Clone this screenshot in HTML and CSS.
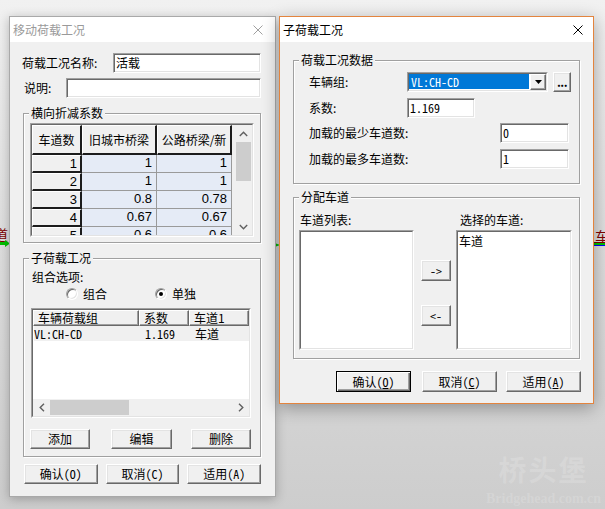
FILE: index.html
```html
<!DOCTYPE html>
<html lang="zh-CN">
<head>
<meta charset="utf-8">
<title>移动荷载工况</title>
<link rel="stylesheet" href="styles.css">
</head>
<body>
<main class="desktop">
  <span class="cad-text cad-text-left">道</span>
  <svg class="cad-arrow" width="10" height="7" viewBox="0 0 10 7"><path d="M0 2H5V0L10 3.5L5 7V5H0Z" fill="#00c000"/></svg>
  <svg class="cad-flag" width="6" height="6" viewBox="0 0 6 6"><path d="M0 0H2V1.5L6 3L2 4.5V6H0Z" fill="#00c000"/></svg>
  <span class="cad-text cad-text-right">车</span>
  <span class="cad-line cad-line-red"></span>
  <span class="cad-line cad-line-green"></span>
  <span class="cad-line cad-line-blue"></span>
  <div class="watermark"><span class="wm-cn">桥头堡</span><span class="wm-en">Bridgehead.com.cn</span></div>

  <section class="window win-left">
    <header class="titlebar inactive">
      <span class="title">移动荷载工况</span>
      <svg class="close" viewBox="0 0 10 10"><path d="M0.5 0.5L9.5 9.5M9.5 0.5L0.5 9.5"/></svg>
    </header>
    <div class="body body-left">
      <div class="row"><span class="lbl lbl-name">荷载工况名称:</span><div class="edit">活载</div></div>
      <div class="row row-desc"><span class="lbl lbl-desc">说明:</span><div class="edit"></div></div>

      <div class="group group-factor">
        <span class="legend">横向折减系数</span>
        <div class="sunken grid-frame"><div class="sunken-in grid-in">
          <div class="grid">
            <div class="gh">车道数</div><div class="gh">旧城市桥梁</div><div class="gh">公路桥梁/新</div>
            <div class="gr">1</div><div class="gd">1</div><div class="gd">1</div>
            <div class="gr">2</div><div class="gd">1</div><div class="gd">1</div>
            <div class="gr">3</div><div class="gd">0.8</div><div class="gd">0.78</div>
            <div class="gr">4</div><div class="gd">0.67</div><div class="gd">0.67</div>
            <div class="gr">5</div><div class="gd">0.6</div><div class="gd">0.6</div>
          </div>
          <div class="vscroll">
            <span class="sb-btn"><svg width="9" height="6" viewBox="0 0 9 6"><polyline points="0.8,5 4.5,1.2 8.2,5" class="chev"/></svg></span>
            <span class="sb-track"><span class="sb-thumb"></span></span>
            <span class="sb-btn"><svg width="9" height="6" viewBox="0 0 9 6"><polyline points="0.8,1 4.5,4.8 8.2,1" class="chev"/></svg></span>
          </div>
        </div></div>
      </div>

      <div class="group group-sub">
        <span class="legend">子荷载工况</span>
        <div class="opt-label">组合选项:</div>
        <div class="radios">
          <span class="radio r-first"><span class="rb"></span>组合</span>
          <span class="radio"><span class="rb checked"></span>单独</span>
        </div>
        <div class="sunken lv-frame"><div class="sunken-in lv-in">
          <div class="lv-head"><span class="lh c-a">车辆荷载组</span><span class="lh c-b">系数</span><span class="lh c-c">车道1</span></div>
          <div class="lv-row"><span class="c-a mono">VL:CH-CD</span><span class="c-b mono">1.169</span><span class="c-c">车道</span></div>
          <div class="lv-fill"></div>
          <div class="hscroll">
            <span class="sb-btn"><svg width="6" height="9" viewBox="0 0 6 9"><polyline points="5,0.8 1.2,4.5 5,8.2" class="chev"/></svg></span>
            <span class="sb-track h"><span class="sb-thumb h"></span></span>
            <span class="sb-btn"><svg width="6" height="9" viewBox="0 0 6 9"><polyline points="1,0.8 4.8,4.5 1,8.2" class="chev"/></svg></span>
          </div>
        </div></div>
        <div class="sub-btns">
          <button class="btn b-add">添加</button>
          <button class="btn b-edit">编辑</button>
          <button class="btn b-del">删除</button>
        </div>
      </div>

      <div class="btnbar btnbar-left">
        <button class="btn b74 mono">确认(O)</button>
        <button class="btn b74 mono">取消(C)</button>
        <button class="btn b74 mono">适用(A)</button>
      </div>
    </div>
  </section>

  <section class="window win-right">
    <header class="titlebar">
      <span class="title">子荷载工况</span>
      <svg class="close" viewBox="0 0 10 10"><path d="M0.5 0.5L9.5 9.5M9.5 0.5L0.5 9.5"/></svg>
    </header>
    <div class="body body-right">
      <div class="group group-data">
        <span class="legend">荷载工况数据</span>
        <div class="frow">
          <span class="flbl w98">车辆组:</span>
          <div class="sunken combo"><div class="sunken-in combo-in">
            <span class="combo-sel mono">VL:CH-CD</span>
            <span class="combo-btn"><svg width="7" height="4" viewBox="0 0 7 4"><path d="M0 0H7L3.5 4Z" fill="#000"/></svg></span>
          </div></div>
          <button class="btn btn-dots">...</button>
        </div>
        <div class="frow mt6"><span class="flbl w98">系数:</span><div class="edit mono e68">1.169</div></div>
        <div class="frow mt5"><span class="flbl w191">加载的最少车道数:</span><div class="edit mono e69">0</div></div>
        <div class="frow mt6"><span class="flbl w191">加载的最多车道数:</span><div class="edit mono e69">1</div></div>
      </div>

      <div class="group group-lane">
        <span class="legend">分配车道</span>
        <div class="lane-col col-l">
          <span class="collbl">车道列表:</span>
          <div class="sunken listbox"><div class="sunken-in lb-in"></div></div>
        </div>
        <div class="lane-mid">
          <button class="btn arrow-btn mono">-&gt;</button>
          <button class="btn arrow-btn mono second">&lt;-</button>
        </div>
        <div class="lane-col col-r">
          <span class="collbl">选择的车道:</span>
          <div class="sunken listbox"><div class="sunken-in lb-in"><span class="lb-item">车道</span></div></div>
        </div>
      </div>

      <div class="btnbar btnbar-right">
        <button class="btn btn-default b75 mono">确认(<u>O</u>)</button>
        <button class="btn b75 mono gap11">取消(<u>C</u>)</button>
        <button class="btn b75 mono gap9">适用(<u>A</u>)</button>
      </div>
    </div>
  </section>
</main>
</body>
</html>
```

FILE: styles.css
```css
* { box-sizing: border-box; }
html, body { margin: 0; padding: 0; }
body {
  width: 605px; height: 509px; overflow: hidden;
  font-family: "Noto Sans CJK SC", "Microsoft YaHei", sans-serif;
  font-size: 12px; line-height: 16px; color: #000;
}
.mono { font-family: "Noto Sans Mono CJK SC", "Noto Sans CJK SC", "DejaVu Sans Mono", monospace; }

.desktop {
  position: relative; width: 605px; height: 509px; overflow: hidden;
  background: linear-gradient(180deg, #f1f1f1 0%, #dedede 45%, #cdcdcd 100%);
}

/* CAD canvas decorations */
.cad-text { position: absolute; color: #800000; font-size: 14px; line-height: 14px; }
.cad-text-left { left: -6px; top: 227px; }
.cad-text-right { left: 595px; top: 229px; }
.cad-arrow { position: absolute; left: 0; top: 240px; }
.cad-flag { position: absolute; left: 274px; top: 242px; }
.cad-line { position: absolute; left: 594px; width: 12px; }
.cad-line-red { top: 242px; height: 1px; background: #800000; }
.cad-line-green { top: 243px; height: 2px; background: #00c000; }
.cad-line-blue { top: 245px; height: 1px; background: #0000ff; }

.watermark {
  position: absolute; left: 486px; top: 448px;
  display: flex; flex-direction: column; align-items: center;
  color: rgba(255, 255, 255, 0.16);
}
.wm-cn { font-family: "Noto Sans CJK SC", serif; font-size: 28px; line-height: 42px; font-weight: 700; letter-spacing: 2px; }
.wm-en { font-family: "Liberation Serif", serif; font-size: 14px; line-height: 17px; font-weight: 700; }

/* windows */
.window { position: absolute; background: #f0f0f0; display: flex; flex-direction: column; }
.win-left { left: 9px; top: 16px; width: 267px; height: 481px; border: 1px solid #a9a9a9; box-shadow: 0 2px 10px rgba(0,0,0,0.25); }
.win-right { left: 279px; top: 16px; width: 315px; height: 388px; border: 1px solid #e3843e; box-shadow: 0 4px 16px rgba(0,0,0,0.32); }

.titlebar {
  flex: none; height: 25px; background: #fff;
  display: flex; align-items: center; justify-content: space-between;
  padding-left: 3px;
}
.title { font-size: 12px; }
.titlebar.inactive .title { color: #9a9a9a; }
.close { width: 10px; height: 10px; fill: none; stroke: #000; stroke-width: 1; }
.titlebar.inactive .close { stroke: #a0a0a0; }
.win-left .close { margin-right: 12px; }
.win-right .close { margin-right: 10px; }

.body { flex: 1; display: flex; flex-direction: column; }
.body-left { padding: 11px 14px 0 12px; }
.body-right { padding: 18px 13px 0 12px; }

/* 3D borders */
.sunken { border: 1px solid; border-color: #a0a0a0 #fff #fff #a0a0a0; background: #fff; }
.sunken-in { height: 100%; border: 1px solid; border-color: #696969 #e3e3e3 #e3e3e3 #696969; }

.edit {
  height: 20px; background: #fff; flex: 1;
  border: 1px solid; border-color: #a0a0a0 #fff #fff #a0a0a0;
  box-shadow: inset 1px 1px 0 #696969, inset -1px -1px 0 #e3e3e3;
  padding: 1px 2px 0 2px; line-height: 16px; white-space: nowrap;
}

.btn {
  appearance: none; margin: 0; padding: 0;
  font-size: 12px; line-height: 16px; color: #000;
  background: #f0f0f0;
  border: 1px solid; border-color: #fff #696969 #696969 #fff;
  box-shadow: inset -1px -1px 0 #a0a0a0, inset 1px 1px 0 #e3e3e3;
  display: flex; align-items: center; justify-content: center;
  height: 20px;
}
.btn:not(.mono) { font-family: "Noto Sans CJK SC", sans-serif; }
.btn u { text-underline-offset: 1px; }
.btn-default {
  border-color: #000;
  box-shadow: inset 1px 1px 0 #fff, inset -1px -1px 0 #696969, inset -2px -2px 0 #a0a0a0;
}

/* left dialog */
.row { display: flex; align-items: center; height: 20px; }
.row-desc { margin-top: 5px; }
.lbl { flex: none; white-space: nowrap; }
.lbl-name { width: 91px; }
.lbl-desc { width: 44px; padding-left: 2px; }

.group {
  position: relative; margin-left: 1px;
  border: 1px solid #a0a0a0;
  box-shadow: inset 1px 1px 0 #fff, 1px 1px 0 #fff;
}
.legend {
  position: absolute; top: -9px; left: 5px;
  padding: 0 2px; background: #f0f0f0; line-height: 16px; white-space: nowrap;
}
.group-factor { margin-top: 15px; height: 130px; padding: 9px 0 0 6px; }
.grid-frame { width: 224px; height: 114px; }
.grid-in { display: flex; justify-content: space-between; background: #f0f0f0; overflow: hidden; }
.grid {
  display: grid; width: 200px; align-self: flex-start;
  grid-template-columns: 50px 75px 75px;
  grid-template-rows: 30px; grid-auto-rows: 18px;
  font-family: "Liberation Sans", Arial, sans-serif; font-size: 13px; line-height: 16px;
}
.gh, .gr {
  background: #f0f0f0;
  border-style: solid; border-width: 1px 2px 2px 1px;
  border-color: #fff #1c1c1c #1c1c1c #fff;
}
.gh {
  display: flex; align-items: center; justify-content: center;
  font-family: "Noto Sans CJK SC", sans-serif; font-size: 12px; white-space: nowrap;
}
.gr { text-align: right; padding-right: 3px; }
.gd {
  background: #e5ebf6; text-align: right; padding-right: 4px;
  border-right: 1px solid #9a9a9a; border-bottom: 1px solid #9a9a9a;
}

.vscroll { flex: none; width: 17px; height: 100%; display: flex; flex-direction: column; background: #f0f0f0; }
.sb-btn { flex: none; width: 17px; height: 17px; display: flex; align-items: center; justify-content: center; }
.chev { fill: none; stroke: #606060; stroke-width: 1.4; }
.sb-track { flex: 1; display: flex; flex-direction: column; }
.sb-thumb { height: 39px; margin: 0 1px; background: #cdcdcd; }
.sb-track.h { flex-direction: row; }
.sb-thumb.h { width: 79px; height: auto; margin: 1px 0; }

.group-sub { margin-top: 15px; height: 199px; padding: 10px 0 0 0; }
.opt-label { padding-left: 8px; height: 16px; }
.radios { display: flex; align-items: center; height: 16px; margin-top: 1px; padding-left: 42px; }
.radio { display: flex; align-items: center; gap: 5px; white-space: nowrap; }
.r-first { width: 89px; }
.rb {
  position: relative; flex: none; width: 12px; height: 12px; border-radius: 50%;
  background: #fff; border: 1px solid; border-color: #a0a0a0 #fff #fff #a0a0a0;
  box-shadow: inset 1px 1px 0 #696969, inset -1px -1px 0 #e3e3e3;
}
.rb.checked::after {
  content: ""; position: absolute; left: 3px; top: 3px;
  width: 4px; height: 4px; border-radius: 50%; background: #000;
}
.lv-frame { margin: 6px 0 0 7px; width: 220px; height: 110px; }
.lv-in { display: flex; flex-direction: column; overflow: hidden; }
.lv-head { display: flex; height: 16px; flex: none; }
.lh {
  background: #f0f0f0; height: 16px; line-height: 13px; padding-left: 4px; white-space: nowrap;
  border: 1px solid; border-color: #fff #696969 #696969 #fff;
  box-shadow: inset -1px -1px 0 #a0a0a0;
}
.c-a { width: 106px; flex: none; }
.c-b { width: 50px; flex: none; }
.c-c { width: 60px; flex: none; }
.lv-row { display: flex; height: 15px; line-height: 15px; margin-left: 1px; background: #f0f0f0; flex: none; white-space: nowrap; }
.lv-row .c-a { width: 105px; padding-left: 0; }
.lv-row .c-b { padding-left: 6px; }
.lv-row .c-c { padding-left: 6px; width: 59px; }
.lv-fill { flex: 1; background: #fff; }
.hscroll { flex: none; height: 17px; display: flex; background: #f0f0f0; }

.sub-btns { display: flex; margin: 11px 0 0 6px; }
.b-add { width: 60px; }
.b-edit { width: 61px; margin-left: 21px; }
.b-del { width: 60px; margin-left: 19px; }

.btnbar { display: flex; }
.btnbar-left { margin: 7px 0 0 2px; gap: 8px; }
.b74 { width: 74px; }

/* right dialog */
.group-data { height: 124px; padding: 11px 0 0 15px; }
.frow { display: flex; align-items: center; height: 20px; }
.mt5 { margin-top: 5px; }
.mt6 { margin-top: 6px; }
.flbl { flex: none; white-space: nowrap; }
.w98 { width: 98px; }
.w191 { width: 191px; }
.e68 { flex: none; width: 68px; }
.e69 { flex: none; width: 69px; }
.combo { width: 141px; height: 20px; flex: none; }
.combo-in { display: flex; background: #fff; }
.combo-sel {
  flex: 1; margin: 0 1px 1px 0; background: #0078d7; color: #fff;
  padding-left: 2px; line-height: 15px; white-space: nowrap;
}
.combo-btn {
  flex: none; width: 16px; display: flex; align-items: center; justify-content: center;
  background: #f0f0f0; border: 1px solid; border-color: #fff #696969 #696969 #fff;
  box-shadow: inset -1px -1px 0 #a0a0a0;
}
.btn-dots { width: 18px; margin-left: 5px; align-items: flex-end; line-height: 12px; padding-bottom: 3px; font-family: "Liberation Sans", sans-serif; font-weight: 700; letter-spacing: -0.5px; }

.group-lane { margin-top: 13px; height: 162px; padding: 14px 0 0 5px; display: flex; }
.lane-col { display: flex; flex-direction: column; }
.col-l { width: 115px; }
.col-r { width: 116px; }
.col-l .collbl { padding-left: 1px; }
.col-r .collbl { padding-left: 4px; }
.collbl { height: 16px; white-space: nowrap; }
.listbox { margin-top: 2px; height: 120px; }
.lb-in { padding: 1px 0 0 1px; line-height: 16px; }
.lane-mid { width: 42px; display: flex; flex-direction: column; padding-left: 7px; }
.arrow-btn { width: 30px; height: 21px; margin-top: 48px; }
.arrow-btn.second { margin-top: 24px; }

.btnbar-right { margin: 12px -1px 0 0; justify-content: flex-end; }
.b75 { width: 75px; height: 21px; }
.gap11 { margin-left: 11px; }
.gap9 { margin-left: 9px; }
```
